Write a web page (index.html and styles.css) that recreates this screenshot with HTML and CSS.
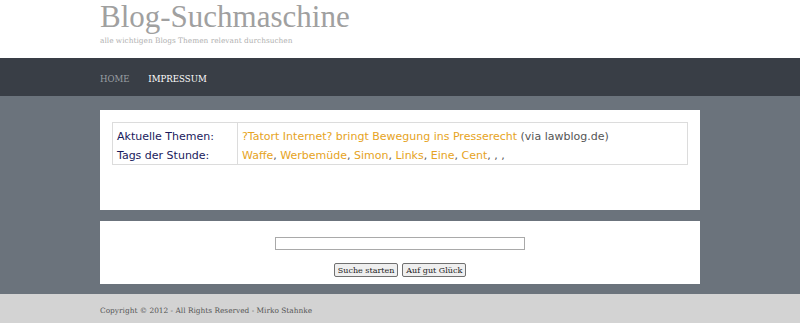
FILE: index.html
```html
<!DOCTYPE html>
<html lang="de">
<head>
  <meta charset="UTF-8" />
  <title>Blog-Suchmaschine</title>
  <link rel="stylesheet" href="styles.css">
</head>
<body>
  <div class="header">
    <div class="wrap">
      <h1 class="logo">Blog-Suchmaschine</h1>
      <div class="tagline">alle wichtigen Blogs Themen relevant durchsuchen</div>
    </div>
  </div>
  <div class="nav">
    <div class="wrap">
      <a href="#" class="nav-home">HOME</a>
      <a href="#" class="nav-active">IMPRESSUM</a>
    </div>
  </div>
  <div class="main">
    <div class="wrap">
      <div class="box topics">
        <table class="topic-table">
          <tr>
            <td class="label">Aktuelle Themen:</td>
            <td><a href="#">?Tatort Internet? bringt Bewegung ins Presserecht</a> <span class="via">(via lawblog.de)</span></td>
          </tr>
          <tr>
            <td class="label">Tags der Stunde:</td>
            <td><a href="#">Waffe</a>, <a href="#">Werbemüde</a>, <a href="#">Simon</a>, <a href="#">Links</a>, <a href="#">Eine</a>, <a href="#">Cent</a>, , ,</td>
          </tr>
        </table>
      </div>
      <div class="box search">
        <form>
          <input type="text" class="search-input" />
          <div class="buttons">
            <button type="button">Suche starten</button>
            <button type="button">Auf gut Glück</button>
          </div>
        </form>
      </div>
    </div>
  </div>
  <div class="footer">
    <div class="wrap">Copyright © 2012 - All Rights Reserved - Mirko Stahnke</div>
  </div>
</body>
</html>
```

FILE: styles.css
```css
body {
  margin: 0;
  font-family: 'DejaVu Serif', Georgia, serif;
  background: #6b737c;
}
.wrap {
  width: 600px;
  margin: 0 auto;
}
.header {
  background: #ffffff;
  height: 58px;
}
.logo {
  margin: 0;
  padding-top: 1px;
  font-family: 'Liberation Serif', 'Times New Roman', serif;
  font-weight: normal;
  font-size: 31px;
  line-height: 32px;
  color: #a0a0a0;
}
.tagline {
  font-size: 7.4px;
  color: #b0b0b0;
  margin-top: 3px;
}
.nav {
  background: #393e46;
  height: 38px;
  line-height: 43px;
  font-size: 8.6px;
}
.nav a {
  text-decoration: none;
  margin-right: 16px;
}
.nav-home {
  color: #9a9ea4;
}
.nav-active {
  color: #ffffff;
}
.main {
  padding: 14px 0 10px;
}
.box {
  background: #ffffff;
}
.topics {
  height: 100px;
  padding: 12px 12px 0;
  box-sizing: border-box;
}
.topic-table {
  width: 576px;
  border-collapse: collapse;
  border: 1px solid #dcdcdc;
  font-family: 'DejaVu Sans', Verdana, sans-serif;
  font-size: 11px;
  line-height: 15px;
}
.topic-table td {
  padding: 4px 4px 1px;
  color: #555555;
  white-space: nowrap;
}
.topic-table tr:first-child td {
  padding-top: 6px;
  padding-bottom: 0;
}
.topic-table td.label {
  width: 116px;
  color: #1a1a5c;
  border-right: 1px solid #dcdcdc;
}
.topic-table a {
  color: #e6a323;
  text-decoration: none;
}
.via {
  color: #555555;
}
.search {
  margin-top: 11px;
  height: 63px;
  text-align: center;
}
.search-input {
  width: 250px;
  height: 13px;
  box-sizing: border-box;
  margin-top: 16px;
  border: 1px solid #a9a9a9;
  padding: 0;
}
.buttons {
  margin-top: 11px;
  display: flex;
  justify-content: center;
  gap: 4px;
}
.buttons button {
  font-family: 'DejaVu Serif', Georgia, serif;
  font-size: 8px;
  padding: 1px 3px;
  height: 14px;
  border: 1px solid #707070;
  border-radius: 2px;
  background: #efefef;
  color: #222222;
}
.footer {
  background: #d3d3d3;
  height: 29px;
  line-height: 33px;
  font-size: 7.4px;
  color: #555555;
}
```
